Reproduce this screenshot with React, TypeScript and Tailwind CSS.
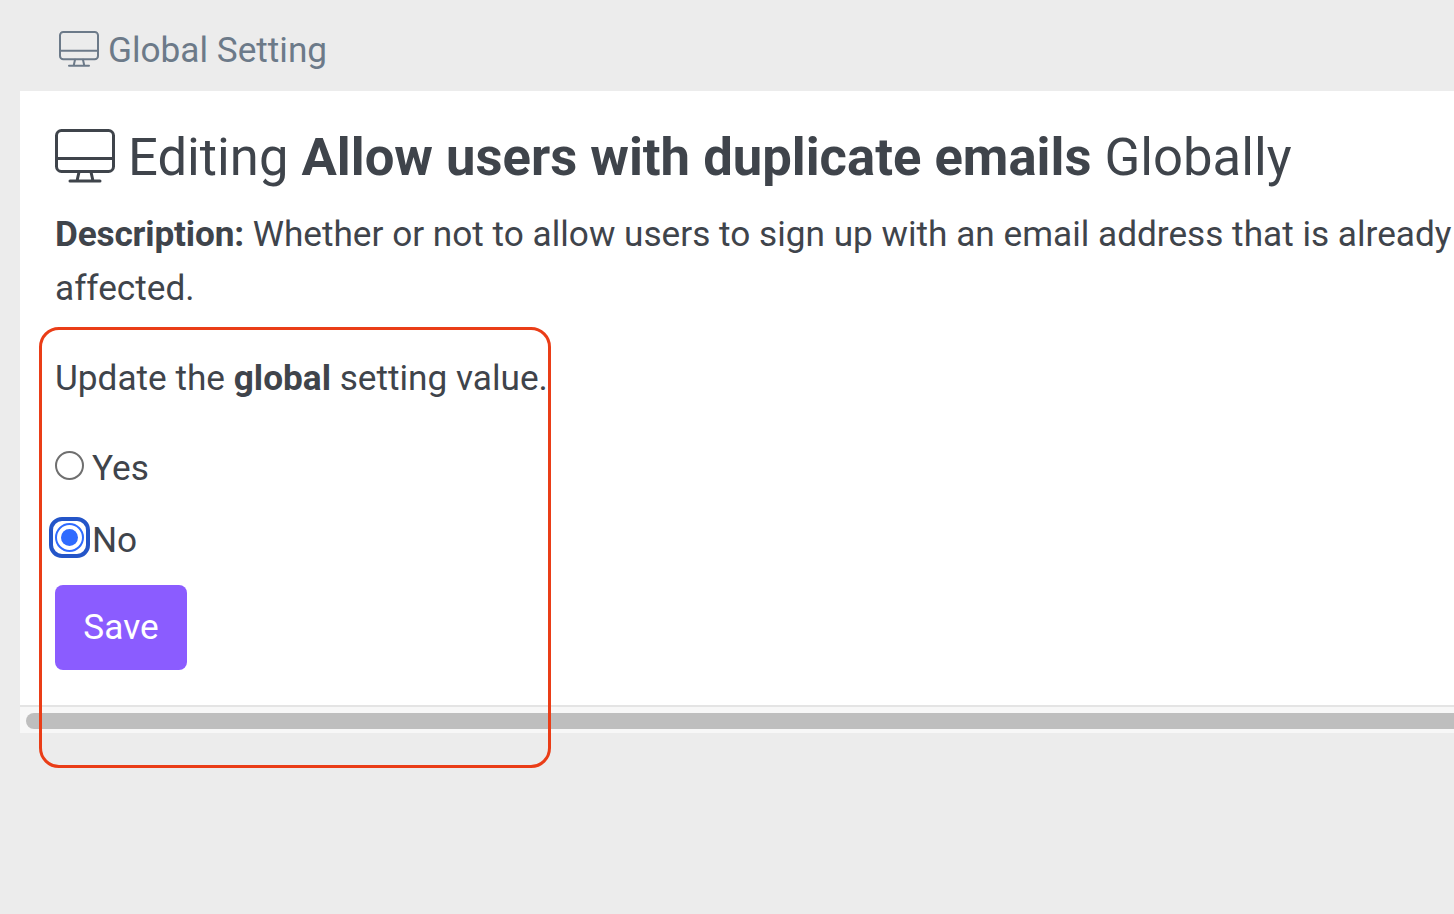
const MonitorIcon = ({ className }: { className: string }) => (
  <svg viewBox="0 0 60 54" fill="none" stroke="currentColor" strokeWidth="3" strokeLinecap="round" strokeLinejoin="round" className={className}>
    <rect x="1.5" y="1.5" width="57" height="41" rx="5" />
    <path d="M1.5 29.5h57" />
    <path d="M24 43l-2 9M36 43l2 9M15 52h30" />
  </svg>
);

export default function App() {
  return (
    <div className="relative h-[914px] w-full overflow-hidden bg-[#ececec] font-['Roboto',sans-serif] text-[#3f444b]">
      <div className="flex h-[91px] items-center pl-[59px] pt-[8px] text-[#6c7a89]">
        <MonitorIcon className="mb-[2px] mr-[9px] h-[36px] w-[40px]" />
        <span className="mt-[2px] text-[35.2px] leading-none">Global Setting</span>
      </div>

      <div className="ml-[20px] h-[642px] overflow-hidden bg-white">
        <div className="h-[616px] w-[1600px] border-b-2 border-[#e4e4e4] pl-[35px]">
          <div className="flex items-start pt-[38px]">
            <MonitorIcon className="mr-[13px] h-[54px] w-[60px] shrink-0" />
            <h1 className="mt-[1px] text-[52.6px] leading-[54px] whitespace-nowrap">
              Editing <b className="font-bold">Allow users with duplicate emails</b> Globally
            </h1>
          </div>
          <p className="mt-[23px] text-[35.2px] leading-[54px] whitespace-nowrap">
            <b className="font-bold tracking-[-0.17px]">Description:</b> Whether or not to allow users to sign up with an email address that is already
            <br />
            affected.
          </p>
          <p className="mt-[36px] text-[35.2px] leading-[54px]">
            Update the <b className="font-bold">global</b> setting value.
          </p>
          <label className="mt-[36px] flex h-[54px] items-center text-[35.2px]">
            <span className="mb-[6px] h-[29px] w-[29px] rounded-full border-2 border-[#6f6f6f] bg-white" />
            <span className="ml-[8px]">Yes</span>
          </label>
          <label className="mt-[18px] flex h-[54px] items-center text-[35.2px]">
            <span className="relative mb-[6px] flex h-[29px] w-[29px] items-center justify-center rounded-full border-2 border-[#2f6bff] bg-white">
              <span className="h-[17px] w-[17px] rounded-full bg-[#2f6bff]" />
              <span className="absolute -inset-[8px] rounded-[13px] border-[4px] border-[#2455c8]" />
            </span>
            <span className="ml-[8px]">No</span>
          </label>
          <button className="mt-[18px] h-[85px] w-[132px] rounded-[8px] bg-[#8b5cff] text-[35.2px] text-white">Save</button>
        </div>
        <div className="h-[26px] bg-[#f7f7f7] pl-[6px] pt-[6px]">
          <div className="h-[16px] w-[1500px] rounded-full bg-[#bebebe]" />
        </div>
      </div>

      <div className="absolute left-[39px] top-[327px] h-[441px] w-[512px] rounded-[20px] border-[3px] border-[#ea3d17]" />
    </div>
  );
}
